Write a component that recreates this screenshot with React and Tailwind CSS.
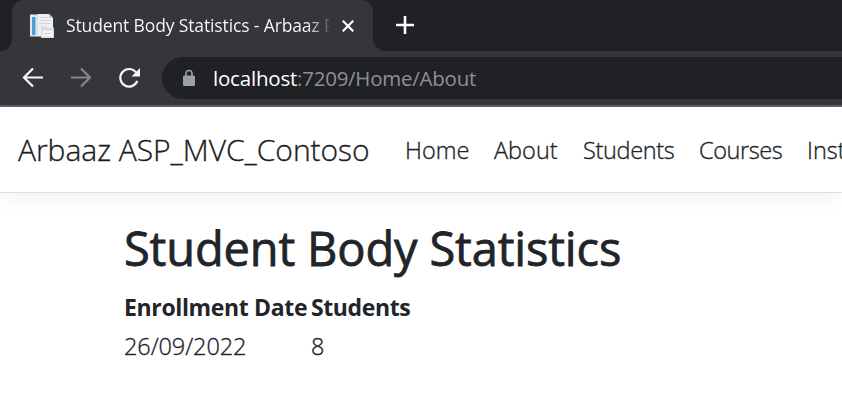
const navLinks = [
  { label: "Home", box: "w-[65px]" },
  { label: "About", box: "w-[65px]" },
  { label: "Students", box: "w-[92px] tracking-[-0.35px]" },
  { label: "Courses", box: "w-[84px] tracking-[-0.4px]" },
  { label: "Inst", box: "w-[40px]" },
];

function FavIcon() {
  return (
    <svg className="h-6 w-6 shrink-0" viewBox="0 0 24 24">
      <path d="M0 .5h13v22H0z" fill="#e6e9eb" />
      <path d="M2 3h3.500v18H2z" fill="#4a9fd8" />
      <path d="M7.500 0H19l4 4V22H7.500z" fill="#eef1f3" />
      <path d="M7.500.5v22" stroke="#c9cdd1" strokeWidth=".6" />
      <path d="M19 0v4h4z" fill="#c3c7cb" />
      <path d="M9.500 3.500h8M9.500 6.500h11M9.500 9.500h11M9.500 12.500h2" stroke="#d3d8dd" strokeWidth="1" />
      <path d="M11 12.500h5l1 1h7v10.500H11z" fill="#d9dcdf" />
      <path d="M12.500 16.500h10.500v6h-10.500z" fill="#f4f5f6" />
      <path d="M14.500 19.500h6" stroke="#c3cad4" />
    </svg>
  );
}

function ToolIcon({ className, children }) {
  return (
    <svg className={className} viewBox="0 0 30 30" fill="none" stroke="currentColor" strokeWidth="2.2">
      {children}
    </svg>
  );
}

function TabStrip() {
  return (
    <div className="flex h-[51px] bg-[#202124]">
      <div className="flex w-3 bg-[#35363a]">
        <div className="h-full w-full rounded-br-xl bg-[#202124]" />
      </div>
      <div className="flex h-[51px] w-[361px] items-center rounded-t-xl bg-[#35363a] pl-[18px]">
        <FavIcon />
        <div className="ml-3 w-[263px] overflow-hidden bg-[linear-gradient(to_right,#fff_240px,#35363a_268px)] bg-clip-text text-[17.5px] tracking-[-0.13px] whitespace-nowrap text-transparent">
          Student Body Statistics - Arbaaz P
        </div>
        <svg className="ml-[13px] h-3 w-3" viewBox="0 0 12 12">
          <path d="M.7.7l10.600 10.600M11.300.7L.7 11.300" stroke="#fff" strokeWidth="2.200" />
        </svg>
      </div>
      <div className="w-3 bg-[#35363a]">
        <div className="h-full w-full rounded-bl-xl bg-[#202124]" />
      </div>
      <svg className="mt-4 ml-[11px] h-[18px] w-[18px]" viewBox="0 0 18 18">
        <path d="M9 0v18M0 9h18" stroke="#fff" strokeWidth="2.600" />
      </svg>
    </div>
  );
}

function Toolbar() {
  return (
    <div className="flex h-14 items-center border-b-2 border-[#5f6064] bg-[#35363a] pl-[18px]">
      <ToolIcon className="h-[30px] w-[30px] text-[#f4f5f6]">
        <path d="M25 14.500H6.500M15 5.500l-9 9 9 9" />
      </ToolIcon>
      <ToolIcon className="ml-[18px] h-[30px] w-[30px] text-[#85868a]">
        <path d="M5 14.500h18.500M15 5.500l9 9-9 9" />
      </ToolIcon>
      <ToolIcon className="ml-[18px] h-[30px] w-[30px] text-[#f4f5f6]">
        <path d="M23.300 18A8.800 8.800 0 1 1 22 9.300" />
        <path d="M26 5v8.500h-8.500z" fill="currentColor" stroke="none" />
      </ToolIcon>
      <div className="ml-[18px] flex h-[42px] flex-1 items-center rounded-l-full bg-[#202124] pl-[21px] text-[20.5px] whitespace-nowrap text-white">
        <svg className="mr-[18px] h-[18px] w-3" viewBox="0 0 12 18">
          <path d="M3 8V4.500a3 3 0 0 1 6 0V8" fill="none" stroke="#9aa0a6" strokeWidth="1.600" />
          <rect y="6.500" width="12" height="10.500" rx="1.500" fill="#9aa0a6" />
        </svg>
        <span className="tracking-[-0.2px]">localhost</span>
        <span className="tracking-[-0.25px] text-[#8f9094]">:7209/Home/About</span>
      </div>
    </div>
  );
}

export default function App() {
  return (
    <div className="h-[419px] w-[842px] overflow-hidden bg-white font-['Open_Sans','Noto_Sans',sans-serif] text-[#212529]">
      <TabStrip />
      <Toolbar />
      <header className="flex h-[86px] items-center border-b border-[#dee2e6] pl-[18px] whitespace-nowrap shadow-[0_6px_18px_rgba(0,0,0,0.05)]">
        <a className="w-[387px] shrink-0 text-[30px] font-light tracking-[-0.04px] text-black/90 [-webkit-text-stroke:0.35px_#1a1a1a]">
          Arbaaz ASP_MVC_Contoso
        </a>
        <nav className="flex gap-6 pt-[3px] text-[23.5px] font-light [-webkit-text-stroke:0.35px_#212529]">
          {navLinks.map((l) => (
            <a key={l.label} className={`shrink-0 ${l.box}`}>{l.label}</a>
          ))}
        </nav>
      </header>
      <main className="pt-[26px] pl-[124px]">
        <h1 className="text-[47px] leading-[58px] tracking-[-0.15px] [-webkit-text-stroke:0.8px_#212529]">Student Body Statistics</h1>
        <table className="mt-[12px] border-collapse text-left text-[23px] leading-[36px]">
          <thead>
            <tr>
              <th className="w-[187px] p-0 pb-[3px] font-bold tracking-[-0.35px]">Enrollment Date</th>
              <th className="p-0 pb-[3px] font-bold tracking-[-0.4px]">Students</th>
            </tr>
          </thead>
          <tbody className="text-[23.5px] font-light tracking-[-0.1px] [-webkit-text-stroke:0.35px_#212529]">
            <tr>
              <td className="p-0">26/09/2022</td>
              <td className="p-0">8</td>
            </tr>
          </tbody>
        </table>
      </main>
    </div>
  );
}
